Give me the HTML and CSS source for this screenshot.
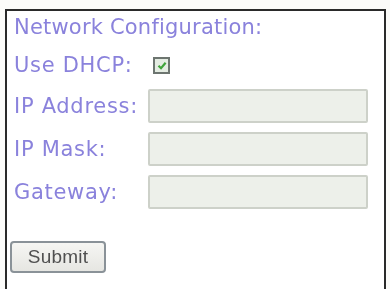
FILE: index.html
```html
<!DOCTYPE html>
<html>
<head>
<meta charset="utf-8">
<link rel="stylesheet" href="styles.css">
</head>
<body>
<div class="panel">
  <div class="title">Network Configuration:</div>
  <div class="row dhcp">
    <span class="label">Use DHCP:</span>
    <span class="check">
      <svg width="10" height="9" viewBox="0 0 10 9"><path d="M1.5 4.8 L4 7.2 L8.6 1.8" fill="none" stroke="#3fa33a" stroke-width="2.2"/></svg>
    </span>
  </div>
  <div class="row">
    <span class="label">IP Address:</span>
    <span class="field"></span>
  </div>
  <div class="row">
    <span class="label">IP Mask:</span>
    <span class="field"></span>
  </div>
  <div class="row">
    <span class="label">Gateway:</span>
    <span class="field"></span>
  </div>
  <div class="actions">
    <span class="btn">Submit</span>
  </div>
</div>
</body>
</html>
```
FILE: styles.css
```css
html, body {
  margin: 0;
  padding: 0;
  background: #fbfbf9;
  width: 390px;
  height: 289px;
  overflow: hidden;
}
body {
  padding: 9px 4px 0 5px;
  box-sizing: border-box;
}
.panel {
  border: 2px solid #2a2a2a;
  border-bottom: none;
  background: #ffffff;
  height: 280px;
  padding: 4px 0 0 7px;
  font-family: "DejaVu Sans", sans-serif;
  font-size: 21px;
  color: #8a82dc;
  filter: blur(0.7px);
  box-sizing: border-box;
}
.title {
  height: 24px;
  line-height: 24px;
  letter-spacing: 0.2px;
}
.row {
  display: flex;
  align-items: center;
  height: 34px;
  margin-top: 9px;
}
.dhcp {
  margin-top: 14px;
  height: 24px;
}
.dhcp + .row {
  margin-top: 12px;
}
.label {
  width: 134px;
  flex: none;
  letter-spacing: 0.7px;
  white-space: nowrap;
}
.dhcp .label {
  width: 139px;
}
.check {
  width: 13px;
  height: 13px;
  border: 2px solid #6d7570;
  background: #e4ece2;
  display: flex;
  align-items: center;
  justify-content: center;
}
.field {
  width: 216px;
  height: 30px;
  background: #edf0ea;
  border: 2px solid #cdd1c9;
  border-radius: 2px;
}
.actions {
  margin-top: 32px;
  margin-left: -4px;
}
.btn {
  display: inline-block;
  width: 92px;
  height: 28px;
  line-height: 28px;
  text-align: center;
  border: 2px solid #8a9298;
  border-radius: 4px;
  background: linear-gradient(#f6f6f3, #e6e6e2);
  color: #505050;
  font-family: "Liberation Sans", sans-serif;
  font-size: 19px;
  letter-spacing: 0.2px;
}
```
